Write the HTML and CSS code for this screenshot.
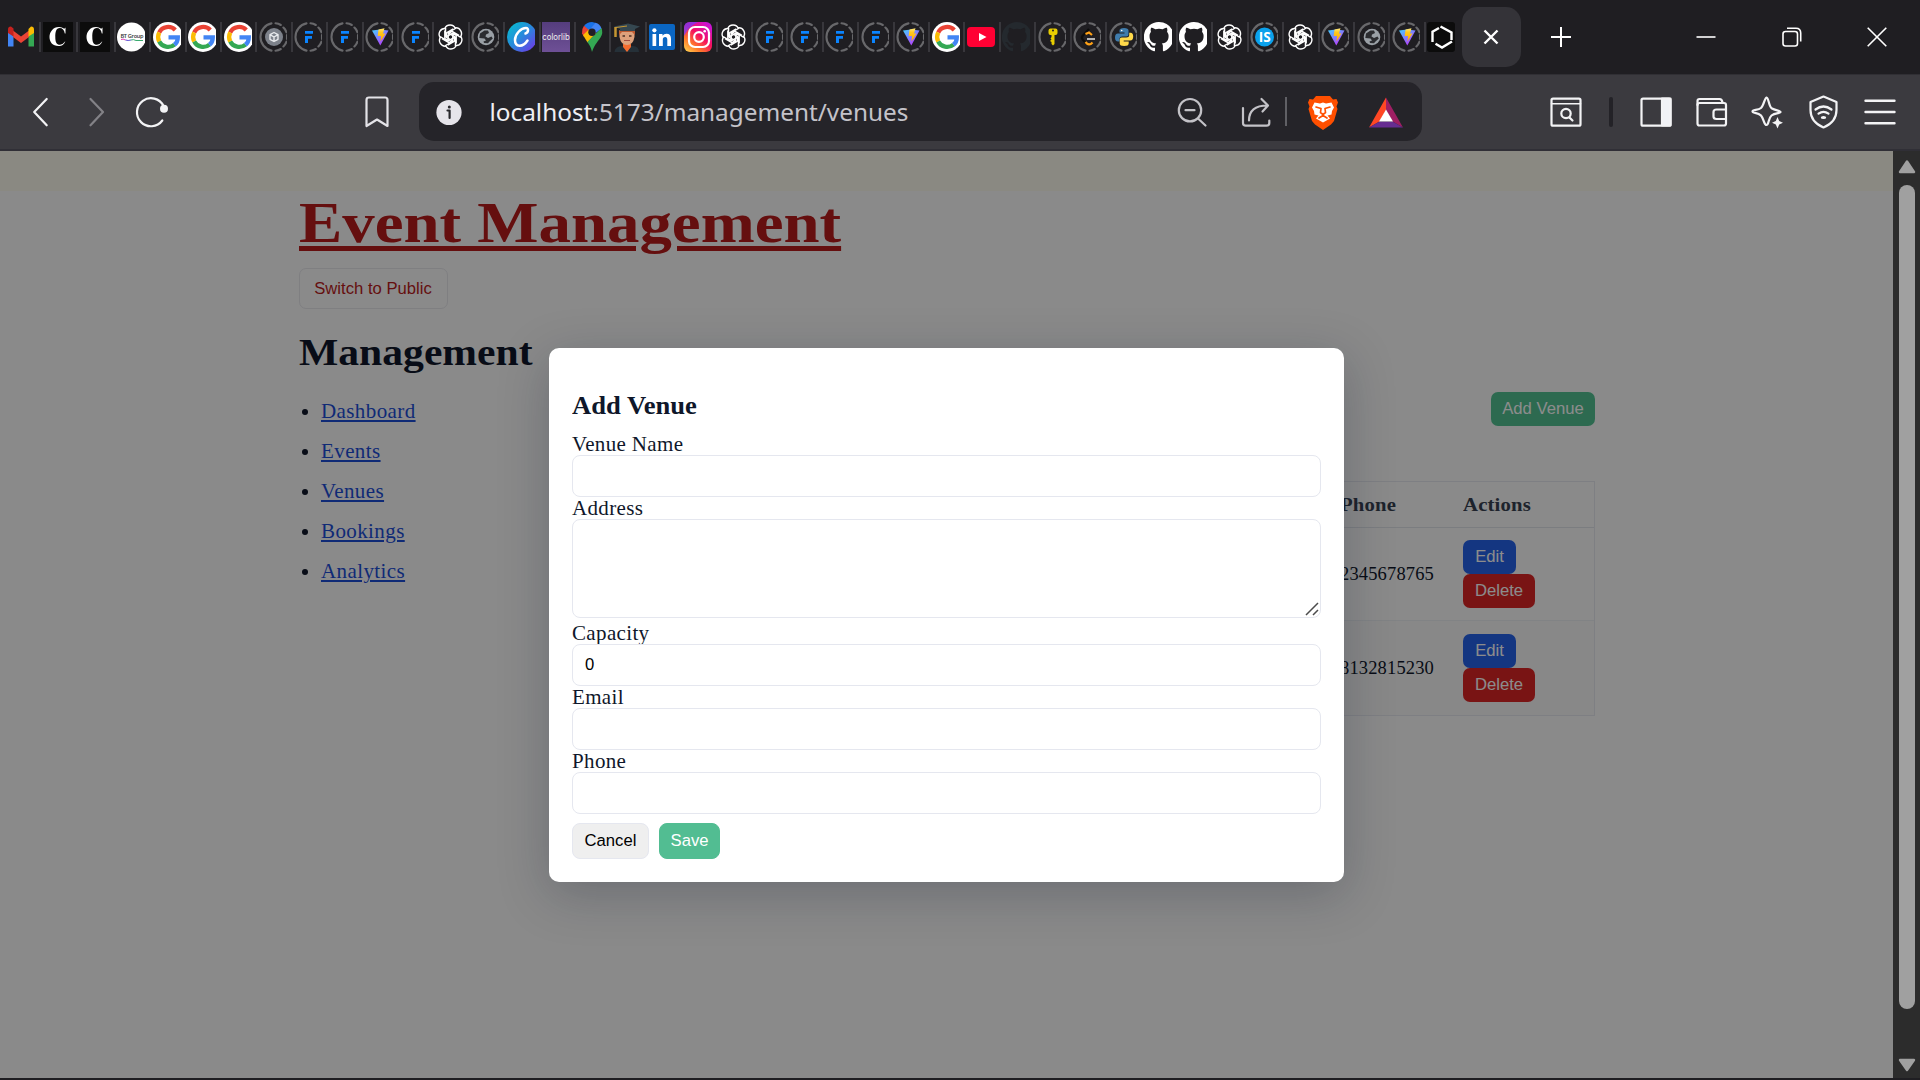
FILE: index.html
```html
<!DOCTYPE html>
<html lang="en">
<head>
<meta charset="utf-8">
<title>Event Management</title>
<link rel="stylesheet" href="styles.css">
</head>
<body>
<svg class="defs" width="0" height="0" aria-hidden="true">
  <defs>
    <linearGradient id="g-canva" x1="0" y1="0" x2="1" y2="1"><stop offset="0" stop-color="#00c4cc"/><stop offset=".5" stop-color="#2a86dd"/><stop offset="1" stop-color="#7d2ae8"/></linearGradient>
    <linearGradient id="g-ig" x1="0" y1="1" x2=".8" y2="0"><stop offset="0" stop-color="#fd5"/><stop offset=".3" stop-color="#ff7a2a"/><stop offset=".6" stop-color="#f50f5f"/><stop offset="1" stop-color="#c913d8"/></linearGradient>
    <linearGradient id="g-vite" x1="0" y1="0" x2=".7" y2="1"><stop offset="0" stop-color="#41d1ff"/><stop offset="1" stop-color="#bd34fe"/></linearGradient>
    <linearGradient id="g-bolt" x1="0" y1="0" x2="0" y2="1"><stop offset="0" stop-color="#ffea83"/><stop offset=".3" stop-color="#ffc91f"/><stop offset="1" stop-color="#ffa800"/></linearGradient>
    <linearGradient id="g-lib" x1="0" y1="0" x2="0" y2="1"><stop offset="0" stop-color="#553d7d"/><stop offset="1" stop-color="#6e5096"/></linearGradient>
  </defs>
  <symbol id="ring" viewBox="0 0 28 30"><path d="M12.5 1.4A13.9 13.9 0 0 0 12.5 28.6M16.5 1.3Q19.500 1.500 21.800 3M24.400 5.500Q26.500 7.500 27.500 10.300M28 13V17M27.500 19.700Q26.500 22.500 24.400 24.500M21.800 27Q19.500 28.500 16.500 28.700" fill="none" stroke="#68686b" stroke-width="2.100" stroke-linecap="round"/></symbol>
  <symbol id="gmail" viewBox="0 0 28 30"><path d="M1 9V24.500H6.500V14Z" fill="#4285f4"/><path d="M27 9V24.500H21.500V14Z" fill="#34a853"/><path d="M6 8.500 14 14.500 22 8.500V15L14 21 6 15Z" fill="#ea4335"/><path d="M1 10V7.500Q1 4.500 4 4.600L6.500 6.500V14.500L1 11Z" fill="#c5221f"/><path d="M27 10V7.500Q27 4.500 24 4.600L21.500 7V14.500L27 11Z" fill="#fbbc04"/></symbol>
  <symbol id="crescent" viewBox="0 0 30 30"><path d="M0 0H30V30H0Z" fill="#0c0c0c"/><path d="M22.500 5.500V11.500H21.800Q20.800 6 16.800 6C13 6 12.300 10 12.300 15S13.500 22.800 17 22.800Q20 22.500 22.300 19.300C21 23 19 24 15.500 24 9.500 24 6.500 20 6.500 15S10 5 16 5Q19 5 21.300 6.800Z" fill="#fff"/></symbol>
  <symbol id="google" viewBox="0 0 28 30"><circle cx="15" cy="15" r="15" fill="#fff"/><g fill="none" stroke-width="4.300"><path d="M22.300 8A10 10 0 0 0 6.200 10.500" stroke="#ea4335"/><path d="M6.200 10.500A10 10 0 0 0 6.200 19.500" stroke="#fbbc04"/><path d="M6.200 19.500A10 10 0 0 0 21.500 22.600" stroke="#34a853"/><path d="M15.500 15.400H24.800Q24.800 20 21.400 22.700" stroke="#4285f4"/></g></symbol>
  <symbol id="cube" viewBox="0 0 28 30"><use href="#ring" width="28" height="30"/><circle cx="15" cy="15" r="9" fill="#7d828b"/><path d="M15 10.500 19 12.700V17.300L15 19.500 11 17.300V12.700ZM11 12.700 15 15 19 12.700M15 15V19.500" fill="none" stroke="#e8eaed" stroke-width="1.400" stroke-linejoin="round"/></symbol>
  <symbol id="framer" viewBox="0 0 28 30"><use href="#ring" width="28" height="30"/><path d="M11 9H19V11.700H11ZM11 14H18V16.700H14V21H11Z" fill="#0a84ff"/></symbol>
  <symbol id="vite" viewBox="0 0 28 30"><use href="#ring" width="28" height="30"/><path d="M7 8.500 15 7.500 23.500 8.500 15.300 23.500Z" fill="url(#g-vite)"/><path d="M13.500 7.500 19.500 6.200 18 11.500H20.500L15.500 19.500 16 14H12.700Z" fill="url(#g-bolt)"/></symbol>
  <symbol id="gpt" viewBox="0 0 28 30"><g transform="translate(14.500 15)" fill="none" stroke="#fff" stroke-width="1.400"><g id="petal"><path d="M-5.700-8.300A5.700 5.700 0 0 1 4.900-8.500L-1.300-5Q-2.300-4.400-2.300-3.400V3.400L-5.700 1.500V-6.500"/></g><use href="#petal" transform="rotate(60)"/><use href="#petal" transform="rotate(120)"/><use href="#petal" transform="rotate(180)"/><use href="#petal" transform="rotate(240)"/><use href="#petal" transform="rotate(300)"/></g></symbol>
  <symbol id="globe" viewBox="0 0 28 30"><use href="#ring" width="28" height="30"/><circle cx="15" cy="15" r="8.300" fill="#9aa0a6"/><path d="M9 11.500 13.500 8.500 17 8.500 18 11 15 12.500 14.500 14.500 17 16 20.500 14.500 21.800 16.500 18.500 19.500 17 21.300 13 21 12.500 19.500 15 18.500 13.500 16.500 8.300 16Z" fill="#2b2c30"/></symbol>
  <symbol id="canva" viewBox="0 0 28 30"><circle cx="15" cy="15" r="15" fill="url(#g-canva)"/><path d="M18.500 11.500C21.500 10.500 22 6 19 6 14 6 8 12 8 18 8 25.500 16 25.500 20.500 18.500" fill="none" stroke="#fff" stroke-width="2.500" stroke-linecap="round"/></symbol>
  <symbol id="maps" viewBox="0 0 28 30"><path d="M14 0A10.500 10.500 0 0 0 6 4L11 9 18 1Z" fill="#1a73e8"/><path d="M6 3.800Q3.500 7 4 11.500L6 15 11.500 8.500Z" fill="#ea4335"/><path d="M17.500 .8 10 9.500 14 14 23.500 6.500Q22 2 17.500 .8Z" fill="#4285f4"/><path d="M5 13 10.800 7.500 18 11 9.500 20.500Z" fill="#fbbc04"/><path d="M23.500 6Q25.500 11 22.500 15.500C18.500 21 16 24 14 30 13 25 11.500 23 9.300 20Z" fill="#34a853"/><circle cx="14" cy="10.300" r="3.700" fill="#211f25"/></symbol>
  <symbol id="grad" viewBox="0 0 28 30"><path d="M1.500 30Q2 24.500 9 24H20Q26 24.500 26 30Z" fill="#253038"/><path d="M10 22H18V25L14 30 10 25Z" fill="#f36c2f"/><path d="M6.500 8H21.500V15Q20 23 14 23T6.500 15Z" fill="#dda17c"/><path d="M6 9H22V13L19 10H9L6 13Z" fill="#bf5c32"/><path d="M9.500 14H12M16 14H18.500" stroke="#4b3024" stroke-width="1.600"/><path d="M11 18.500H17" stroke="#a44b3c"/><path d="M1 4.500 15 1.500 27 4.500 22 7V9H7V7Z" fill="#354750"/><path d="M2.500 5V15" stroke="#c59632" stroke-width="2.500"/><path d="M3 5.500 14 4" stroke="#c59632"/></symbol>
  <symbol id="linkedin" viewBox="0 0 28 30"><rect x="1" y="2" width="26" height="26" rx="2" fill="#0a66c2"/><path d="M4.500 12H8.200V24H4.500ZM11 12H14.500V13.700Q15.700 11.700 18.500 11.700 23 11.700 23 17V24H19.300V17.800Q19.300 15 17.200 15 14.800 15 14.800 17.800V24H11Z" fill="#fff"/><circle cx="6.400" cy="8.300" r="2.100" fill="#fff"/></symbol>
  <symbol id="insta" viewBox="0 0 28 30"><rect width="28" height="30" rx="6" fill="url(#g-ig)"/><path d="M0 14V6Q0 0 6 0H14Q5 4 0 14Z" fill="#7638fa" opacity=".75"/><rect x="5" y="5" width="20" height="20" rx="6" fill="none" stroke="#fff" stroke-width="2.200"/><circle cx="15" cy="15" r="4.800" fill="none" stroke="#fff" stroke-width="2.200"/><circle cx="20.700" cy="9.300" r="1.300" fill="#fff"/></symbol>
  <symbol id="youtube" viewBox="0 0 28 30"><rect y="5" width="28" height="20" rx="4" fill="#ff0033"/><path d="M12 11 19.500 15 12 19Z" fill="#fff"/></symbol>
  <symbol id="github" viewBox="0 0 28 30"><path d="M15 0A15 15 0 0 0 10 29.200C10.800 29.300 11 28.900 11 28.500V25.700C7.200 26.500 6.200 24.300 5.900 23.300 5.500 22.300 4.700 21.400 3.900 21 3.300 20.600 3 20.100 4 20.100 6 20.200 6.800 22 7.300 22.600 8.500 24.200 10.200 23.900 11.200 23.400 11.300 22.500 11.700 21.800 12.200 21.400 8.800 21 5.500 19.700 5.500 14 5.500 12.300 6.100 10.900 7 9.800 6.800 9.400 6.300 7.800 7.100 5.700 7.100 5.700 8.400 5.300 11.300 7.300A14.300 14.300 0 0 1 18.700 7.300C21.600 5.300 22.900 5.700 22.900 5.700 23.700 7.800 23.200 9.400 23 9.800 24 10.900 24.600 12.300 24.600 14 24.600 19.700 21.200 21 17.800 21.400 18.400 21.900 18.900 22.800 18.900 24.200V28.500C18.900 28.900 19.200 29.400 20 29.200A15 15 0 0 0 28 22V7.500A15 15 0 0 0 15 0Z" fill="currentColor"/></symbol>
  <symbol id="key" viewBox="0 0 28 30"><use href="#ring" width="28" height="30"/><path d="M12.500 6.500H17.500Q19.500 6.500 19.500 8.500V11Q19.500 13 17.500 13H16.500V22L15 23.500 13.500 22V20L12 19 13.500 17.500 12.500 16.500 13.500 15V13H12.500Q10.500 13 10.500 11V8.500Q10.500 6.500 12.500 6.500Z" fill="#e8cd00"/><circle cx="15" cy="8.500" r="1" fill="#211f25"/></symbol>
  <symbol id="leet" viewBox="0 0 28 30"><use href="#ring" width="28" height="30"/><path d="M16 7 9.500 14Q8 16 10 18L13 21" stroke="#0c0c0c" stroke-width="2.200" fill="none"/><path d="M12.500 12 16 10.500 19 13M12.500 20Q16 24.500 19.500 20.500" stroke="#ffa116" stroke-width="2.200" fill="none"/><path d="M14 17H22" stroke="#b3b3b3" stroke-width="2"/></symbol>
  <symbol id="python" viewBox="0 0 28 30"><use href="#ring" width="28" height="30"/><path d="M15 6Q10.500 6 10.500 8.500V10.500H15.500V11.500H9Q6 11.500 6 15.500T9 19.500H10.500V17Q10.500 14.500 13.500 14.500H17.500Q19.500 14.500 19.500 12.500V8.500Q19.500 6 15 6Z" fill="#3f7cac"/><path d="M15.200 24Q19.700 24 19.700 21.500V19.500H14.700V18.500H21.200Q24.200 18.500 24.200 14.500T21.200 10.700H20.200V13Q20.200 15.500 17.200 15.500H12.700Q10.700 15.500 10.700 17.500V21.500Q10.700 24 15.200 24Z" fill="#ffd94a"/><circle cx="12.700" cy="8.500" r=".8" fill="#fff"/></symbol>
  <symbol id="hex" viewBox="0 0 28 30"><rect width="28" height="30" rx="3" fill="#0c0c0c"/><g fill="none" stroke="#fff" stroke-width="2.400"><path d="M5.500 20V9.800L12 6"/><path d="M13.500 4.500 24.500 10.500V18"/><path d="M25 19.500 15 25.500 8.500 21.800"/></g></symbol>
</svg>

<div class="tabbar">
  <div class="tab gm"><svg><use href="#gmail"/></svg></div>
  <div class="tab cr"><svg><use href="#crescent"/></svg></div>
  <div class="tab cr2"><svg><use href="#crescent"/></svg></div>
  <div class="tab"><svg viewBox="0 0 28 30"><circle cx="14.500" cy="15" r="14.500" fill="#fff"/><text x="3.500" y="15.500" font-family="Open Sans, sans-serif" font-size="5.600" font-weight="600" fill="#333" textLength="23">BT Group</text><path d="M4 17.500Q6 16.500 8.500 18" stroke="#e040b0" fill="none"/><path d="M8.500 18Q11 19 14 18" stroke="#5a4bd0" fill="none"/><path d="M14 18Q16.500 17 19 18.500H26" stroke="#3aab70" fill="none"/></svg></div>
  <div class="tab"><svg><use href="#google"/></svg></div>
  <div class="tab"><svg><use href="#google"/></svg></div>
  <div class="tab"><svg><use href="#google"/></svg></div>
  <div class="tab"><svg><use href="#cube"/></svg></div>
  <div class="tab"><svg><use href="#framer"/></svg></div>
  <div class="tab"><svg><use href="#framer"/></svg></div>
  <div class="tab"><svg><use href="#vite"/></svg></div>
  <div class="tab"><svg><use href="#framer"/></svg></div>
  <div class="tab"><svg><use href="#gpt"/></svg></div>
  <div class="tab"><svg><use href="#globe"/></svg></div>
  <div class="tab"><svg><use href="#canva"/></svg></div>
  <div class="tab"><svg viewBox="0 0 28 30"><path d="M0 0H28V30H0Z" fill="url(#g-lib)"/><text x=".3" y="18" font-family="Inter, sans-serif" font-size="8.500" fill="#eee" textLength="27.400" lengthAdjust="spacingAndGlyphs">colorlib</text></svg></div>
  <div class="tab"><svg><use href="#maps"/></svg></div>
  <div class="tab"><svg><use href="#grad"/></svg></div>
  <div class="tab"><svg><use href="#linkedin"/></svg></div>
  <div class="tab"><svg><use href="#insta"/></svg></div>
  <div class="tab"><svg><use href="#gpt"/></svg></div>
  <div class="tab"><svg><use href="#framer"/></svg></div>
  <div class="tab"><svg><use href="#framer"/></svg></div>
  <div class="tab"><svg><use href="#framer"/></svg></div>
  <div class="tab"><svg><use href="#framer"/></svg></div>
  <div class="tab"><svg><use href="#vite"/></svg></div>
  <div class="tab"><svg><use href="#google"/></svg></div>
  <div class="tab"><svg><use href="#youtube"/></svg></div>
  <div class="tab faded"><svg><use href="#github"/></svg></div>
  <div class="tab"><svg><use href="#key"/></svg></div>
  <div class="tab"><svg><use href="#leet"/></svg></div>
  <div class="tab"><svg><use href="#python"/></svg></div>
  <div class="tab"><svg><use href="#github"/></svg></div>
  <div class="tab"><svg><use href="#github"/></svg></div>
  <div class="tab"><svg><use href="#gpt"/></svg></div>
  <div class="tab"><svg viewBox="0 0 28 30"><use href="#ring" width="28" height="30"/><circle cx="14.500" cy="15" r="9.500" fill="#0ba1ec"/><text x="8.700" y="20" font-family="Open Sans, sans-serif" font-weight="700" font-size="13.500" fill="#fff">IS</text></svg></div>
  <div class="tab"><svg><use href="#gpt"/></svg></div>
  <div class="tab"><svg><use href="#vite"/></svg></div>
  <div class="tab"><svg><use href="#globe"/></svg></div>
  <div class="tab"><svg><use href="#vite"/></svg></div>
  <div class="tab"><svg><use href="#hex"/></svg></div>
  <div class="active-tab"><svg viewBox="0 0 16 16" width="16" height="16"><path d="M1.500 1.500 14.500 14.500M14.500 1.500 1.500 14.500" stroke="#fff" stroke-width="2.400"/></svg></div>
  <svg class="newtab" viewBox="0 0 20 20"><path d="M10 0V20M0 10H20" stroke="#fff" stroke-width="2"/></svg>
  <div class="window-buttons">
    <svg viewBox="0 0 20 20"><path d="M.5 10H19.500" stroke="#fff" stroke-width="1.600"/></svg>
    <svg viewBox="0 0 20 20"><rect x="1" y="4.500" width="14.500" height="14.500" rx="2.500" fill="none" stroke="#fff" stroke-width="1.600"/><path d="M5 1.200H14Q18.700 1.200 18.700 6V14.500" fill="none" stroke="#fff" stroke-width="1.600"/></svg>
    <svg viewBox="0 0 20 20"><path d="M.7 .7 19.300 19.300M19.300 .7 .7 19.300" stroke="#fff" stroke-width="1.600"/></svg>
  </div>
</div>

<div class="toolbar">
  <svg class="ic back" viewBox="0 0 36 36"><path d="M24.700 5 12.200 18 24.700 31.300"/></svg>
  <svg class="ic fwd" viewBox="0 0 36 36"><path d="M11.500 5 24 18 11.500 31.300"/></svg>
  <svg class="ic reload" viewBox="0 0 36 36"><path d="M29.500 12A14 14 0 1 0 28.300 26.500"/><circle cx="30" cy="14.700" r="4" fill="#f3f3f5" stroke="none"/></svg>
  <svg class="ic mark" viewBox="0 0 36 36"><path d="M7.500 32V6Q7.500 3.500 10 3.500H26Q28.500 3.500 28.500 6V32L18 25.500Z"/></svg>
  <div class="address">
    <svg class="ic info" viewBox="0 0 36 36"><circle cx="18" cy="18.500" r="12.600" fill="#e6e4ea" stroke="none"/><path d="M16.500 16.500H18.600V24" stroke="#29282d"/><circle cx="18.300" cy="13" r="1.500" fill="#29282d" stroke="none"/></svg>
    <div class="url"><b>localhost</b>:5173/management/venues</div>
    <svg class="ic soft" viewBox="0 0 36 36"><circle cx="17" cy="16.200" r="11.200"/><path d="M12.500 16.200H21.500M25 24.500 32.500 31.500"/></svg>
    <svg class="ic soft share" viewBox="0 0 36 36"><path d="M5 14V29Q5 31.700 7.700 31.700H28.500Q31.300 31.700 31.300 29V26.500M11 26.500C11 17 16 11.500 29.500 11.500M23.500 5 30 11.500 24.500 17.500"/></svg>
    <span class="bar"></span>
    <svg class="ic brave" viewBox="0 0 36 36"><path d="M11 2H25L28 5.500 31.500 5 33 8.500 31.500 12.500 32.500 15 29 27 26 30.500 18 36 10 30.500 7 27 3.500 15 4.500 12.500 3 8.500 4.500 5 8 5.500Z" fill="#ff4f00" stroke="none"/><path d="M9.500 8.500 15 9.500 18 8.500 21 9.500 26.500 8.500 29 13.500 27 17 26.500 20.500 22.500 21.500 25 24.500 18 28.500 11 24.500 13.500 21.500 9.500 20.500 9 17 7 13.500Z" fill="#fff" stroke="none"/><path d="M11 13 16 14.500 15.500 18.500 18 20.500 20.500 18.500 20 14.500 25 13M14 24 18 21.500 22 24" stroke="#ff4f00" stroke-width="1.700"/></svg>
    <svg class="ic bat" viewBox="0 0 36 36"><g stroke="none"><path d="M18 3.500 1 33.500 11.500 27.500 18 16Z" fill="#ff4724"/><path d="M18 3.500V16L24.500 27.500 35 33.500Z" fill="#9e1f63"/><path d="M1 33.500H35L24.500 27.500H11.500Z" fill="#662d91"/><path d="M18 15.500 11 27.500H25Z" fill="#fff"/></g></svg>
  </div>
  <svg class="ic find" viewBox="0 0 36 36"><rect x="3.500" y="4.700" width="29" height="27" rx="1.500"/><path d="M3.500 9.700H32.500" stroke-width="1.600"/><circle cx="18" cy="19.500" r="4.700" stroke-width="2.200"/><path d="M21.500 23.500 24.500 26.500"/></svg>
  <span class="divider"></span>
  <svg class="ic panel" viewBox="0 0 36 36"><rect x="3.500" y="4.700" width="29" height="27" rx="1.500"/><path d="M24 4.500H32.500V31.500H24Z" fill="#f1f2f6"/></svg>
  <svg class="ic wallet" viewBox="0 0 36 36"><rect x="3.500" y="9" width="28.500" height="22.500" rx="2"/><path d="M3.500 11V7Q3.500 5 5.500 5H25.500Q28 5 28.500 8.500M32 15.500H22.500Q19.500 15.500 19.500 18V22.500Q19.500 25 22.500 25H32"/></svg>
  <svg class="ic spark" viewBox="0 0 36 36"><path d="M17.500 3.500C20 4 19.500 12.500 23 14.500S31.500 16.500 31.500 18 26 18.500 22.500 21.500 20 31 17.500 31 15 25 12 21.500 3.500 19.500 3.500 17.500 9 16.500 12 14 15.500 4 17.500 3.500Z"/><path d="M28.500 23 30.200 27 34 28.700 30.200 30.500 28.500 34.500 26.800 30.500 23 28.700 26.800 27Z" fill="#f3f3f5" stroke="none"/></svg>
  <svg class="ic shield" viewBox="0 0 36 36"><path d="M18.500 2.500 31.500 8V16Q31.500 28 18.500 33.500 5.500 28 5.500 16V8Z"/><path d="M10.500 15.500Q18.500 9.500 26.500 15.500M13.500 19.700Q18.500 16 23.500 19.700"/><ellipse cx="18.500" cy="23.500" rx="2.700" ry="1.500" fill="#f3f3f5" stroke="none"/></svg>
  <svg class="ic menu" viewBox="0 0 36 36"><path d="M3.500 6.700H32.500M3.500 18H32.500M3.500 29.300H32.500" stroke-width="2.400"/></svg>
</div>

<div class="viewport">
  <div class="page">
    <div class="strip"></div>
    <div class="container">
      <h1 class="brand"><a>Event Management</a></h1>
      <button class="switch">Switch to Public</button>
      <div class="columns">
        <nav class="side">
          <h2>Management</h2>
          <ul>
            <li><a>Dashboard</a></li>
            <li><a>Events</a></li>
            <li><a>Venues</a></li>
            <li><a>Bookings</a></li>
            <li><a>Analytics</a></li>
          </ul>
        </nav>
        <main class="main">
          <div class="actions"><button class="btn green">Add Venue</button></div>
          <div class="table">
            <div class="row head"><span></span><b><i>Phone</i></b><b><i>Actions</i></b></div>
            <div class="row"><span></span><span>2345678765</span><div class="ops"><button class="btn blue">Edit</button><button class="btn red">Delete</button></div></div>
            <div class="row alt"><span></span><span>8132815230</span><div class="ops"><button class="btn blue">Edit</button><button class="btn red">Delete</button></div></div>
          </div>
        </main>
      </div>
    </div>
    <div class="backdrop">
      <form class="modal">
        <h3>Add Venue</h3>
        <label>Venue Name</label><input type="text">
        <label>Address</label>
        <div class="area"><svg viewBox="0 0 14 14" width="14" height="14"><path d="M1 13 13 1M8 13 13 8" stroke="#4c4c4c" stroke-width="1.500"/></svg></div>
        <label>Capacity</label><input type="text" value="0">
        <label>Email</label><input type="text">
        <label>Phone</label><input type="text">
        <div class="form-actions"><button type="button" class="cancel">Cancel</button><button type="button" class="save">Save</button></div>
      </form>
    </div>
  </div>
  <div class="scrollbar">
    <svg width="18" height="14" viewBox="0 0 18 14"><path d="M9 1.500 16 12H2Z" fill="#a0a0a0" stroke="#a0a0a0" stroke-width="2.400" stroke-linejoin="round"/></svg>
    <div class="thumb"></div>
    <svg width="18" height="14" viewBox="0 0 18 14"><path d="M9 12 16 2H2Z" fill="#a0a0a0" stroke="#a0a0a0" stroke-width="2.400" stroke-linejoin="round"/></svg>
  </div>
</div>
</body>
</html>
```
FILE: styles.css
```css
* { box-sizing: border-box; }
body {
  margin: 0;
  width: 1920px;
  height: 1080px;
  overflow: hidden;
  display: flex;
  flex-direction: column;
  background: #1f1e22;
  color: #0f172a;
  font-family: "Liberation Serif", serif;
}
.defs { position: absolute; }
button, input { font-family: "Liberation Sans", sans-serif; font-size: 16.67px; margin: 0; }

/* tab strip */
.tabbar { height: 75px; display: flex; align-items: center; background: #1f1e22; border-bottom: 1px solid #302f34; flex: none; }
.tab { width: 35.42px; height: 30px; padding-left: 1.6px; border-left: 2px solid #38373c; flex: none; }
.tab svg { display: block; width: 28px; height: 30px; color: #fff; }
.tab.gm { width: 39px; border: 0; padding-left: 7px; }
.tab.cr { width: 37px; padding-left: 2px; }
.tab.cr2 { width: 37.700px; padding-left: 2px; }
.tab.cr svg, .tab.cr2 svg { width: 30px; }
.tab.faded svg { color: #24292e; }
.active-tab { width: 59px; height: 60px; margin-left: 2.500px; border-radius: 15px; background: #343338; display: flex; align-items: center; justify-content: center; flex: none; }
.newtab { width: 20px; height: 20px; margin-left: 30px; flex: none; }
.window-buttons { display: flex; gap: 65.500px; margin-left: auto; padding-right: 33px; }
.window-buttons svg { width: 20px; height: 20px; }

/* toolbar */
.toolbar { height: 76px; display: flex; align-items: center; padding-bottom: 1px; background: #3b3a3f; border-bottom: 2px solid #302f36; flex: none; }
.ic { width: 36px; height: 36px; flex: none; fill: none; stroke: #f3f3f5; stroke-width: 2.200; stroke-linecap: round; stroke-linejoin: round; }
.back { margin-left: 22px; }
.fwd { margin-left: 21px; stroke: #838287; }
.reload { margin-left: 19px; }
.mark { margin-left: 188.500px; stroke: #e4e3e8; }
.address { width: 1003px; height: 59px; margin-left: 24.500px; padding: 0 18px 0 12px; border-radius: 15px; background: #252429; display: flex; align-items: center; flex: none; }
.url { flex: 1; margin-left: 22.500px; padding-bottom: 1px; font: 24.350px "Noto Sans", sans-serif; color: #c4c3c9; }
.url b { font-weight: 400; color: #f0eff3; }
.soft { stroke: #c3c2c7; }
.share { margin-left: 29px; }
.bar { width: 2px; height: 29px; margin-left: 11px; background: #606065; }
.brave { margin-left: 18px; }
.bat { margin-left: 27px; }
.find { margin-left: 125.500px; }
.divider { width: 4px; height: 30px; border-radius: 2px; margin-left: 25.500px; background: #232227; }
.panel { margin-left: 24.500px; }
.wallet { margin-left: 20px; }
.spark { margin-left: 19.500px; }
.shield { margin-left: 20px; }
.menu { margin-left: 20.500px; }

/* page */
.viewport { height: 927px; display: flex; flex: none; }
.page { position: relative; width: 1893px; overflow: hidden; background: #fbfbfb; }
.strip { height: 40px; background: #fcfaed; }
.container { width: 1296px; margin-left: 299px; }
.brand { margin: 0; height: 77px; font-size: 58px; line-height: 64px; white-space: nowrap; color: #b91c1c; }
.brand a { display: inline-block; transform: scaleX(1.118); transform-origin: left; text-decoration: underline; text-decoration-thickness: 5px; text-underline-offset: 3.500px; }
.switch { display: block; width: 149px; height: 41px; border: 1px solid #e8e8ec; border-radius: 7px; background: transparent; color: #b91c1c; padding: 0; margin-left: -.5px; white-space: nowrap; }
.columns { display: flex; gap: 24px; }
.side { width: 250px; flex: none; }
.side h2 { margin: 23px 0 0; font-size: 37px; line-height: 42px; transform: scaleX(1.125); transform-origin: left; }
.side ul { margin: 17px 0 0; padding: 0 0 0 22px; font-size: 21px; line-height: 40px; letter-spacing: .4px; }
.side li::marker { font-size: 21px; }
.side a { color: #1d4ed8; text-decoration: underline; }
.main { flex: 1; padding-top: 83px; }
.actions { display: flex; justify-content: flex-end; margin-bottom: 55px; }
.btn { display: block; height: 34px; border: 0; border-radius: 7px; padding: 0; color: #fff; white-space: nowrap; }
.green { background: #52c192; width: 104px; }
.blue { background: #2563eb; width: 53px; }
.red { background: #dc2626; width: 72px; }
.table { border: 1px solid #e6e8ef; font-size: 18.500px; }
.row { display: grid; grid-template-columns: 1fr 123px 131px; height: 93.500px; align-items: center; border-bottom: 1px solid #eceef2; letter-spacing: .15px; }
.row > span { padding-top: 2px; }
.row:last-child { border-bottom: 0; }
.row.head { height: 45.500px; padding-top: 2px; border-bottom: 1px solid #e1e3ea; color: #374151; }
.row.alt { background: #f8f8f8; }
.row b i { display: inline-block; font-style: normal; transform: scaleX(1.12); transform-origin: left; }

/* dialog */
.backdrop { position: absolute; inset: 0; background: rgba(0, 0, 0, .45); display: flex; align-items: center; justify-content: center; }
.modal { width: 795px; height: 534px; padding: 23px; background: #fff; border-radius: 10px; box-shadow: 0 12px 50px rgba(15, 23, 42, .25); display: flex; flex-direction: column; }
.modal h3 { margin: 21px 0 14px; font-size: 24.500px; line-height: 27px; transform: scaleX(1.085); transform-origin: left; }
.modal label { font-size: 21px; line-height: 22px; height: 22px; letter-spacing: .35px; }
.modal input, .area { width: 749px; height: 42px; border: 1px solid #e5e7ef; border-radius: 8px; background: transparent; padding: 0 12px; color: #000; flex: none; }
.area { height: 99px; margin-bottom: 4px; padding: 0 1px 1px; display: flex; align-items: flex-end; justify-content: flex-end; }
.form-actions { display: flex; gap: 10px; margin-top: 9px; }
.cancel, .save { height: 36px; border: 1px solid #e5e7ef; border-radius: 8px; padding: 1px 0 0; width: 77px; background: #efefef; color: #000; }
.save { width: 61px; background: #52bd92; border-color: #52bd92; color: #fff; }

.scrollbar { width: 27px; background: #2c2c2c; display: flex; flex-direction: column; align-items: center; padding: 9px 0 6px; }
.thumb { width: 16px; height: 824px; margin: 11px 0 auto; border-radius: 8px; background: #a0a0a0; flex: none; }
.scrollbar svg { flex: none; }
```
